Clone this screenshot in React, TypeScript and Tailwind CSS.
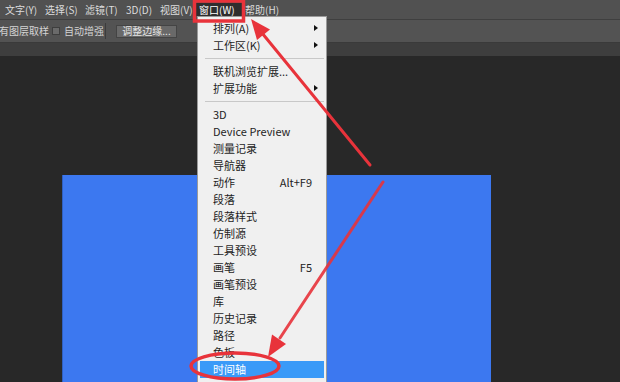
import React from "react";

const FONT = { fontFamily: '"Noto Sans CJK SC", "Noto Sans", sans-serif' };

type Item =
  | { kind: "item"; label: string; shortcut?: string; sub?: boolean; active?: boolean }
  | { kind: "sep" };

const items: Item[] = [
  { kind: "item", label: "排列(A)", sub: true },
  { kind: "item", label: "工作区(K)", sub: true },
  { kind: "sep" },
  { kind: "item", label: "联机浏览扩展..." },
  { kind: "item", label: "扩展功能", sub: true },
  { kind: "sep" },
  { kind: "item", label: "3D" },
  { kind: "item", label: "Device Preview" },
  { kind: "item", label: "测量记录" },
  { kind: "item", label: "导航器" },
  { kind: "item", label: "动作", shortcut: "Alt+F9" },
  { kind: "item", label: "段落" },
  { kind: "item", label: "段落样式" },
  { kind: "item", label: "仿制源" },
  { kind: "item", label: "工具预设" },
  { kind: "item", label: "画笔", shortcut: "F5" },
  { kind: "item", label: "画笔预设" },
  { kind: "item", label: "库" },
  { kind: "item", label: "历史记录" },
  { kind: "item", label: "路径" },
  { kind: "item", label: "色板" },
  { kind: "item", label: "时间轴", active: true },
];

function Menu() {
  return (
    <div
      className="absolute left-[197px] top-[16px] w-[130px] h-[380px] bg-[#f0f0f0] border border-[#9a9a9a] pt-[3px] px-[2px]"
      style={FONT}
    >
      {items.map((it, i) =>
        it.kind === "sep" ? (
          <div key={i} className="h-[9px] flex items-center pl-[5px]">
            <div className="h-px w-full bg-[#c8c8c8]" />
          </div>
        ) : (
          <div
            key={i}
            className={`relative h-[17px] flex items-center pl-[13px] pr-[12px] text-[11px] leading-none ${
              it.active ? "bg-[#3a9af8] text-white" : "text-[#1e1e1e]"
            }`}
          >
            <span className="flex-1">{it.label}</span>
            {it.shortcut && <span>{it.shortcut}</span>}
            {it.sub && (
              <span className="absolute right-[6px] top-[5px] w-0 h-0 border-y-[3.5px] border-y-transparent border-l-[4px] border-l-[#111]" />
            )}
          </div>
        )
      )}
    </div>
  );
}

function Annotations() {
  const red = "#e8333b";
  return (
    <svg className="absolute inset-0 pointer-events-none" width={620} height={382} viewBox="0 0 620 382">
      <rect x={194.5} y={1} width={49} height={20} fill="none" stroke={red} strokeWidth={3.5} />
      <line x1={370} y1={165} x2={262} y2={33} stroke={red} strokeWidth={3} strokeLinecap="round" />
      <polygon points="251,19 270,29.5 257,40" fill={red} />
      <line x1={383} y1={182} x2={280} y2={338} stroke={red} strokeWidth={3} strokeLinecap="round" opacity={0.9} />
      <polygon points="268,357 272,334.5 286,344" fill={red} />
      <ellipse cx={235} cy={366} rx={44} ry={13} fill="none" stroke={red} strokeWidth={3.5} />
    </svg>
  );
}

export default function App() {
  return (
    <div className="relative w-[620px] h-[382px] overflow-hidden bg-[#282828] flex flex-col" style={FONT}>
      {/* menu bar */}
      <div className="h-[20px] bg-[#515151] border-b border-[#3f3f3f] flex items-center pl-[5px] text-[10px] text-[#dcdcdc] leading-none">
        <span className="w-[40px]">文字(Y)</span>
        <span className="w-[40px]">选择(S)</span>
        <span className="w-[41px]">滤镜(T)</span>
        <span className="w-[34px]">3D(D)</span>
        <span className="w-[36px]">视图(V)</span>
        <span className="w-[47px] h-[13px] flex items-center pl-[3px] bg-[#2e2e2e] text-white">窗口(W)</span>
        <span className="ml-[2px]">帮助(H)</span>
      </div>
      {/* options bar */}
      <div className="h-[23px] bg-[#535353] border-b border-[#3a3a3a] flex items-center text-[10px] text-[#d4d4d4] leading-none">
        <span className="-ml-[1px] w-[53px]">有图层取样</span>
        <span className="w-[8px] h-[8px] bg-[#6a6a6a] border border-[#3e3e3e]" />
        <span className="ml-[4px] w-[41px]">自动增强</span>
        <span className="w-px h-[16px] bg-[#3c3c3c]" />
        <span className="ml-[10px] w-[61px] h-[13px] bg-[#696969] border border-[#444] flex items-center justify-center text-[#e6e6e6]">
          调整边缘...
        </span>
      </div>
      {/* tab strip */}
      <div className="h-[13px] bg-[#3e3e3e]" />
      {/* canvas */}
      <div className="flex-1 pt-[119px] pl-[62px]">
        <div className="w-[429px] h-full bg-[#3c78f0] border-l border-[#2f5fc0]" />
      </div>
      <Menu />
      <Annotations />
    </div>
  );
}
